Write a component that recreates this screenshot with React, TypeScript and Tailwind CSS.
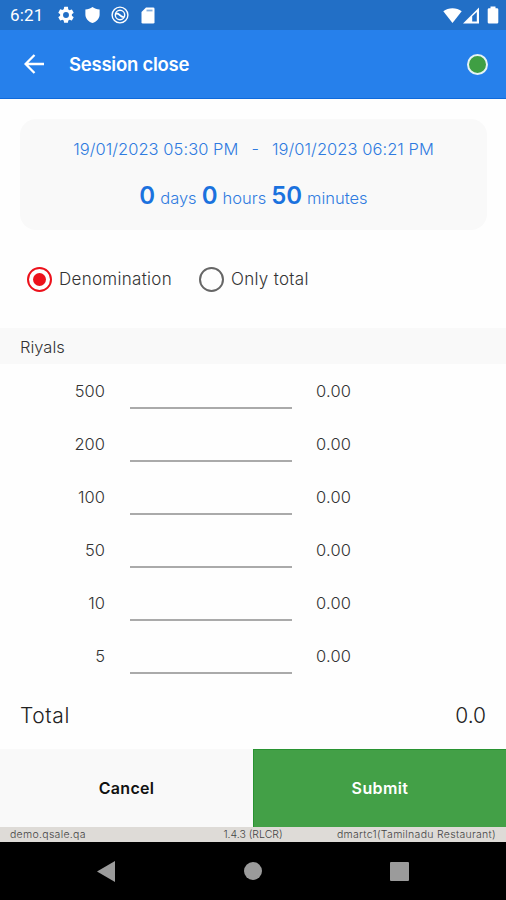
import React from 'react';

interface Denomination {
  value: string;
  amount: string;
}

const denominations: Denomination[] = [
  { value: '500', amount: '0.00' },
  { value: '200', amount: '0.00' },
  { value: '100', amount: '0.00' },
  { value: '50', amount: '0.00' },
  { value: '10', amount: '0.00' },
  { value: '5', amount: '0.00' },
];

const StatusBar: React.FC = () => (
  <div className="flex h-[30px] items-center justify-between bg-[#226fc6] pl-[10px] pr-[7px] text-white">
    <div className="flex items-center">
      <span className="w-[47px] font-[Roboto] text-[17px] leading-none tracking-[0.2px]">6:21</span>
      {/* settings */}
      <svg className="mr-[9px]" width="18" height="18" viewBox="1 1 22 22" fill="currentColor">
        <path d="M19.14 12.94c.04-.3.06-.61.06-.94s-.02-.64-.07-.94l2.03-1.58a.49.49 0 0 0 .12-.61l-1.92-3.32a.49.49 0 0 0-.59-.22l-2.39.96c-.5-.38-1.03-.7-1.62-.94l-.36-2.54A.48.48 0 0 0 13.92 2h-3.84a.48.48 0 0 0-.47.41l-.36 2.54c-.59.24-1.13.57-1.62.94l-2.39-.96a.49.49 0 0 0-.59.22L2.74 8.87a.48.48 0 0 0 .12.61l2.03 1.58c-.05.3-.09.63-.09.94s.02.64.07.94l-2.03 1.58a.49.49 0 0 0-.12.61l1.92 3.32c.12.22.37.29.59.22l2.39-.96c.5.38 1.03.7 1.62.94l.36 2.54c.05.24.24.41.48.41h3.84c.24 0 .44-.17.47-.41l.36-2.54c.59-.24 1.13-.56 1.62-.94l2.39.96c.22.08.47 0 .59-.22l1.92-3.32a.48.48 0 0 0-.12-.61l-2.01-1.58zM12 15.6A3.6 3.6 0 1 1 12 8.4a3.6 3.6 0 0 1 0 7.2z" />
      </svg>
      {/* shield */}
      <svg className="mr-[10px]" width="17" height="18" viewBox="0 0 16 18" preserveAspectRatio="none" fill="currentColor">
        <path d="M8 1C6 2.600 3.800 3.300 1.300 3.400V8.500C1.300 12.500 4 15.600 8 17C12 15.600 14.700 12.500 14.700 8.500V3.400C12.200 3.300 10 2.600 8 1Z" />
      </svg>
      {/* double ring with a wave through it */}
      <svg className="mr-[12px]" width="18" height="18" viewBox="0 0 18 18" fill="none" stroke="currentColor">
        <circle cx="9" cy="9" r="7.900" strokeWidth="1.400" />
        <circle cx="9" cy="9" r="4.700" strokeWidth="1.400" />
        <path d="M4.800 7.800C8 6 9.300 11.500 12.800 11" strokeWidth="1.900" />
      </svg>
      {/* sd card */}
      <svg width="14" height="17" viewBox="0 0 14 17">
        <path d="M5 .500H12.200Q13.500 .500 13.500 1.800V15.200Q13.500 16.500 12.200 16.500H1.800Q.500 16.500 .500 15.200V5Z" fill="currentColor" />
        <path d="M5.500 3.500H11.500" stroke="#226fc6" strokeWidth="1.800" opacity=".55" />
      </svg>
    </div>
    <div className="flex items-center">
      <svg className="mr-[1px]" width="19" height="17" viewBox="0 0 19 17" fill="currentColor">
        <path d="M.300 4.200C5.300 .200 13.700 .200 18.700 4.200L9.500 16Z" />
      </svg>
      <svg className="mr-[8px]" width="16" height="17" viewBox="0 0 16 17">
        <path d="M0 16.500L16 .500V16.500Z" fill="currentColor" />
        <path d="M9.200 9.200L13.800 5V14.500H9.200Z" fill="#226fc6" />
      </svg>
      <svg width="12" height="18" viewBox="0 0 12 18" fill="currentColor">
        <path d="M3.500 .500H8.500V2.200H10Q11.300 2.200 11.300 3.500V16.200Q11.300 17.500 10 17.500H2Q.700 17.500 .700 16.200V3.500Q.700 2.200 2 2.200H3.500Z" />
      </svg>
    </div>
  </div>
);

const Header: React.FC = () => (
  <div className="flex h-[69px] items-center border-b border-[#0f6adb] bg-[#2680eb] pl-[24px] pr-[18px] text-white">
    <svg width="21" height="20" viewBox="0 0 21 20" fill="none" stroke="currentColor" strokeWidth="2.300">
      <path d="M20 10H2M10.500 1L1.600 10L10.500 19" />
    </svg>
    <h1 className="ml-[24px] flex-1 pt-[2px] text-[18.5px] font-semibold tracking-[-0.25px]">Session close</h1>
    <span className="h-[21px] w-[21px] rounded-full border-2 border-[#e5f3f3] bg-[#3f9f43]" />
  </div>
);

const SessionCard: React.FC = () => (
  <div className="ml-[20px] mr-[19px] mt-[20px] h-[111px] rounded-[16px] bg-[#f9f9f9] pt-[19px] text-center text-[#2f7be0]">
    <div className="flex h-[22px] items-center justify-center whitespace-pre text-[16.5px] font-light tracking-[0.05px]">
      <span>19/01/2023 05:30 PM</span>
      <span className="mx-[13px]">-</span>
      <span>19/01/2023 06:21 PM</span>
    </div>
    <div className="mt-[18px] flex h-[30px] items-baseline justify-center gap-[5px] text-[16.500px] font-light">
      <b className="text-[24px] font-semibold text-[#1b72de]">0</b>
      <span>days</span>
      <b className="text-[24px] font-semibold text-[#1b72de]">0</b>
      <span>hours</span>
      <b className="text-[24px] font-semibold text-[#1b72de]">50</b>
      <span>minutes</span>
    </div>
  </div>
);

const App: React.FC = () => {
  return (
    <div className="flex h-[900px] w-[506px] flex-col overflow-hidden bg-[#fefefe] font-[Inter,sans-serif] text-[#333]">
      <StatusBar />
      <Header />
      <SessionCard />

      <div className="mt-[36px] flex h-[26px] items-center pl-[27px] text-[17px] font-light tracking-[0.3px]">
        <span className="flex h-[25px] w-[25px] items-center justify-center rounded-full border-[2.5px] border-[#ec111b]">
          <span className="h-[13px] w-[13px] rounded-full bg-[#ec111b]" />
        </span>
        <span className="ml-[7px] w-[140px] pt-[2px]">Denomination</span>
        <span className="h-[25px] w-[25px] rounded-full border-2 border-[#666]" />
        <span className="ml-[7px] pt-[2px]">Only total</span>
      </div>

      <div className="mt-[36px] flex h-[36px] items-center bg-[#f9f9f9] pl-[20px] pt-[2px] text-[16.500px] font-light">
        Riyals
      </div>

      <div className="h-[318px]">
        {denominations.map((d) => (
          <div key={d.value} className="flex h-[53px] text-[16.500px] font-light leading-[55px]">
            <span className="w-[105px] text-right">{d.value}</span>
            <span className="ml-[25px] h-[45px] w-[162px] border-b-2 border-[#aaa]" />
            <span className="ml-[24px] tracking-[0.2px]">{d.amount}</span>
          </div>
        ))}
      </div>

      <div className="flex h-[67px] items-center justify-between px-[20px] pt-px text-[21px] font-light text-[#222]">
        <span className="tracking-[0.6px]">Total</span>
        <span>0.0</span>
      </div>

      <div className="flex h-[78px] text-[16px] font-semibold">
        <button className="w-[253px] bg-[#f9f9f9] tracking-[0.3px] text-[#111]">Cancel</button>
        <button className="flex-1 border-l border-t border-[#299332] bg-[#43a047] pb-[2px] tracking-[0.4px] text-white">Submit</button>
      </div>

      <div className="grid h-[15px] grid-cols-[1fr_auto_1fr] items-center bg-[#dedbd7] px-[10px] text-[10.500px] font-light tracking-[0.3px] text-[#444]">
        <span>demo.qsale.qa</span>
        <span className="tracking-normal">1.4.3 (RLCR)</span>
        <span className="text-right">dmartc1(Tamilnadu Restaurant)</span>
      </div>

      <div className="flex flex-1 items-center justify-between bg-black pl-[97px] pr-[97px]">
        <svg width="18" height="21" viewBox="0 0 18 21" fill="#9b9b9b">
          <path d="M18 0V21L0 10.500Z" />
        </svg>
        <span className="h-[18px] w-[18px] rounded-full bg-[#9b9b9b]" />
        <span className="h-[19px] w-[19px] rounded-[1px] bg-[#9b9b9b]" />
      </div>
    </div>
  );
};

export default App;
